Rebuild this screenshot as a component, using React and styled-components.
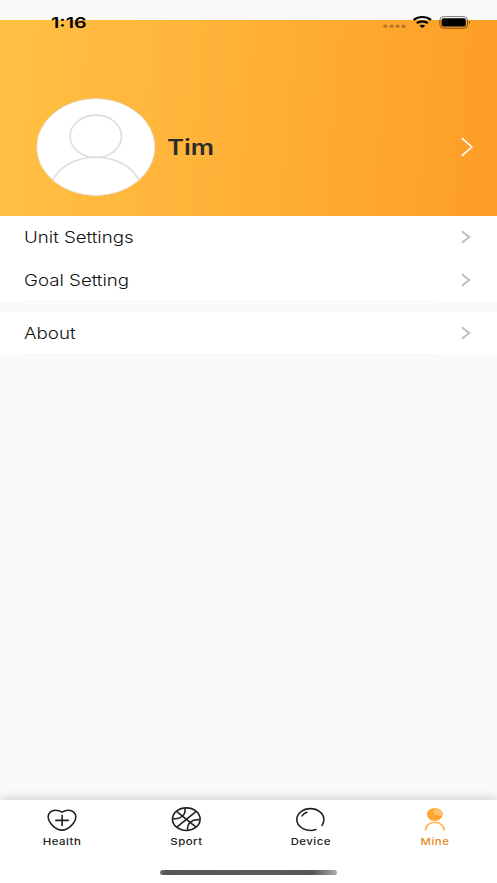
import React from 'react'
import styled, { createGlobalStyle } from 'styled-components'

function StatusBar() {
  return (
    <Status>
      <Time>1:16</Time>
      <StatusIcons>
        <svg width="24" height="14" viewBox="0 0 24 14" fill="#000" fillOpacity="0.28">
          <ellipse cx="2.4" cy="11.3" rx="2.1" ry="1.7" />
          <ellipse cx="8.6" cy="11.3" rx="2.1" ry="1.7" />
          <ellipse cx="14.6" cy="11.3" rx="2.1" ry="1.7" />
          <ellipse cx="20.6" cy="11.3" rx="2.1" ry="1.7" />
        </svg>
        <svg width="20" height="14" viewBox="0.7 0 20 14" fill="none" stroke="#000" strokeWidth="2.2">
          <path d="M1.3 4.9 C6 1 14 1 18.7 4.9" />
          <path d="M4.5 8.1 C7.6 5.7 12.4 5.7 15.5 8.1" />
          <path d="M10 13 L7.1 10.7 C8.7 9.4 11.3 9.4 12.9 10.7 Z" fill="#000" stroke="none" />
        </svg>
        <svg width="32" height="14" viewBox="0 0 32 14">
          <rect x="0.9" y="1.6" width="27.6" height="11.6" rx="3.6" fill="none" stroke="#000" strokeOpacity="0.5" />
          <rect x="2.6" y="3.3" width="24.2" height="8.2" rx="1.8" />
          <path d="M30 5.6 C31.3 6.1 31.3 8.7 30 9.2 Z" fillOpacity="0.5" />
        </svg>
      </StatusIcons>
    </Status>
  )
}

function Chevron() {
  return (
    <RowArrow width="10" height="14" viewBox="0 0 10 14">
      <path d="M0.8 1.2 L8.2 7 L0.8 12.8" />
    </RowArrow>
  )
}

function Avatar() {
  return (
    <svg width="120" height="99" viewBox="0 0 120 99" fill="none" stroke="#dedede">
      <defs>
        <clipPath id="shoulders">
          <ellipse cx="59.8" cy="49.1" rx="58.8" ry="48.2" />
        </clipPath>
      </defs>
      <ellipse cx="59.8" cy="49.1" rx="59" ry="48.4" fill="#fff" strokeWidth="0.8" />
      <ellipse cx="59.8" cy="38.3" rx="25.7" ry="21.2" strokeWidth="1.6" />
      <path d="M16.6 82.2 C32 51.6 88 51.6 103 82.2" strokeWidth="1.6" clipPath="url(#shoulders)" />
    </svg>
  )
}

function HealthIcon() {
  return (
    <svg width="34" height="26" viewBox="0 0 34 26" fill="none" stroke="#222" strokeWidth="1.6" strokeLinecap="round">
      <path d="M17 5.1 C14.8 3.8 13 3.3 10.5 3.3 C6.2 3.3 3.2 6 3.2 9.7 C3.2 15.5 10.5 23.1 17 23.1 C23.5 23.1 30.8 15.5 30.8 9.7 C30.8 6 27.8 3.3 23.5 3.3 C21 3.3 19.2 3.8 17 5.1 Z" />
      <path d="M17.1 8.2 V18.6 M10.9 13.4 H23.3" />
    </svg>
  )
}

function SportIcon() {
  return (
    <svg width="34" height="26" viewBox="-0.3 -0.1 34 26" fill="none" stroke="#222" strokeWidth="1.6">
      <ellipse cx="17" cy="12.1" rx="13.8" ry="11.3" />
      <path d="M7.3 4.2 L26.7 20.1 M26.9 4.3 L7.2 20.3" />
      <path d="M15.6 1.2 C16.8 7.5 11.5 12.7 3.5 11.4" />
      <path d="M30.5 12.7 C22.7 11.6 17.4 16.6 18.4 23" />
    </svg>
  )
}

function DeviceIcon() {
  return (
    <svg width="34" height="26" viewBox="0.6 -0.2 34 26" fill="none" stroke="#222" strokeWidth="1.6" strokeLinecap="round">
      <path d="M22.5 22.3 C13.5 25.3 3.4 20.2 3.4 12.4 C3.4 6.3 9.5 1.4 17 1.4 C24.5 1.4 30.5 6.3 30.5 12.4 C30.5 14.8 29.6 16.7 28.6 18.2" />
      <path d="M8.7 8.7 C9.9 6.9 11.5 5.8 13.5 5.1" />
    </svg>
  )
}

function MineIcon() {
  return (
    <svg width="34" height="26" viewBox="0.2 0 34 26" fill="none">
      <defs>
        <clipPath id="head">
          <ellipse cx="17" cy="7.4" rx="7.9" ry="6.5" />
        </clipPath>
      </defs>
      <ellipse cx="17" cy="7.4" rx="7.9" ry="6.5" fill="#ffa532" />
      <ellipse cx="21.7" cy="4" rx="5.8" ry="5" fill="#ffbf6c" clipPath="url(#head)" />
      <path d="M7.6 23.6 C7.9 12.6 26.1 12.6 26.4 23.6" stroke="#ffad40" strokeWidth="1.4" />
    </svg>
  )
}

function Row({ label, last }) {
  return (
    <RowLine $last={last}>
      <Label>{label}</Label>
      <Chevron />
    </RowLine>
  )
}

function Tab({ label, icon, active }) {
  return (
    <TabItem $active={active}>
      {icon}
      <TabLabel>{label}</TabLabel>
    </TabItem>
  )
}

function App() {
  return (
    <Screen>
      <GlobalStyle />
      <StatusBar />
      <Profile>
        <Avatar />
        <Name>Tim</Name>
        <svg width="13" height="20" viewBox="-0.7 0 13 20" fill="none" stroke="#fff" strokeWidth="1.6">
          <path d="M1 1.2 L11.2 10 L1 18.8" />
        </svg>
      </Profile>
      <Group>
        <Row label="Unit Settings" />
        <Row label="Goal Setting" last />
      </Group>
      <Group>
        <Row label="About" last />
      </Group>
      <Spacer />
      <TabBar>
        <Tabs>
          <Tab label="Health" icon={<HealthIcon />} />
          <Tab label="Sport" icon={<SportIcon />} />
          <Tab label="Device" icon={<DeviceIcon />} />
          <Tab label="Mine" icon={<MineIcon />} active />
        </Tabs>
        <HomeIndicator />
      </TabBar>
    </Screen>
  )
}

export default App

const GlobalStyle = createGlobalStyle`
  * {
    box-sizing: border-box;
  }
  body {
    margin: 0;
    background: #fafafa;
    font-family: Inter, "Liberation Sans", sans-serif;
  }
  svg {
    display: block;
    flex-shrink: 0;
  }
`
const Screen = styled.div`
  position: relative;
  display: flex;
  flex-direction: column;
  width: 497px;
  height: 883px;
  padding-top: 20px;
  overflow: hidden;
  background: #fafafa;
`
const Status = styled.div`
  position: absolute;
  top: 0;
  left: 0;
  right: 0;
  display: flex;
  align-items: flex-start;
  justify-content: space-between;
  padding: 15px 26px 0 50.5px;
`
const Time = styled.span`
  font-size: 15.2px;
  font-weight: 600;
  line-height: 16px;
  transform: scaleX(1.3);
  transform-origin: left;
`
const StatusIcons = styled.div`
  display: flex;
  gap: 6px;
`
const Profile = styled.div`
  display: flex;
  align-items: center;
  height: 196px;
  padding: 58px 24px 0 36px;
  background: linear-gradient(95deg, #ffc144 0%, #ffb037 50%, #fd9d25 100%);
`
const Name = styled.div`
  flex: 1;
  margin-left: 11px;
  color: #2b2b2b;
  font-size: 21px;
  font-weight: 600;
  transform: scaleX(1.23);
  transform-origin: left;
`
const Group = styled.div`
  background: #fff;

  & + & {
    margin-top: 10px;
  }
`
const RowLine = styled.div`
  position: relative;
  display: flex;
  align-items: center;
  justify-content: space-between;
  height: 43px;
  padding: 0 26px 0 24.4px;

  &::after {
    content: "";
    display: ${({ $last }) => ($last ? 'block' : 'none')};
    position: absolute;
    left: 24px;
    right: 61px;
    bottom: 0;
    height: 1px;
    background: #f5f5f5;
  }
`
const RowArrow = styled.svg`
  margin-bottom: 2px;
  fill: none;
  stroke: #bfbfbf;
  stroke-width: 2;
`
const Label = styled.span`
  color: #111;
  font-size: 15.4px;
  font-weight: 350;
  transform: scaleX(1.215);
  transform-origin: left;
`
const Spacer = styled.div`
  flex: 1;
`
const TabBar = styled.div`
  display: flex;
  flex-direction: column;
  align-items: center;
  height: 83px;
  background: #fff;
  box-shadow: 0 -1px 10px rgba(0, 0, 0, 0.2);
`
const Tabs = styled.div`
  display: flex;
  width: 100%;
  height: 70px;
`
const TabItem = styled.div`
  display: flex;
  flex: 1;
  flex-direction: column;
  align-items: center;
  padding-top: 7px;
  color: ${({ $active }) => ($active ? '#e78a1e' : '#222')};
`
const TabLabel = styled.span`
  margin-top: 2px;
  font-size: 9.5px;
  font-weight: 500;
  line-height: 14px;
  letter-spacing: 0.4px;
  transform: scaleX(1.2);
`
const HomeIndicator = styled.div`
  width: 177px;
  height: 5px;
  border-radius: 3px;
  background: linear-gradient(90deg, #777 0%, #555 3%, #5c5c5c 60%, #555 86%, #aaa 100%);
`
